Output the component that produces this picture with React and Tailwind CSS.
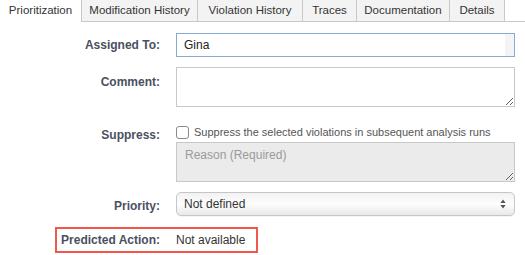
import React from 'react';

const tabs = [
  { label: 'Prioritization', width: 82, active: true },
  { label: 'Modification History', width: 116 },
  { label: 'Violation History', width: 105 },
  { label: 'Traces', width: 54 },
  { label: 'Documentation', width: 93 },
  { label: 'Details', width: 55 }
];

const Label = ({ children, className = '' }) => (
  <div className={`w-[160px] shrink-0 text-right text-[12px] font-bold text-[#4b5060] ${className}`}>
    {children}
  </div>
);

const App = () => {
  return (
    <div
      className="w-[525px] h-[255px] bg-white overflow-hidden text-[#333]"
      style={{ fontFamily: '"Liberation Sans", Arial, sans-serif' }}
    >
      {/* tab strip */}
      <div className="flex h-[22px] border-b border-[#c9c9c9]">
        {tabs.map((tab) => (
          <div
            key={tab.label}
            style={{ width: tab.width }}
            className={`flex items-center justify-center text-[11.5px] text-[#333] border-r border-[#c9c9c9] ${
              tab.active ? 'bg-white h-[22px] -mb-px' : 'bg-[#f3f3f3]'
            }`}
          >
            {tab.label}
          </div>
        ))}
      </div>

      <div className="pt-[11px]">
        {/* assigned to */}
        <div className="flex items-center h-[24px]">
          <Label>Assigned To:</Label>
          <div className="ml-[16px] w-[339px] h-[24px] border border-[#86acd6] flex items-center">
            <span className="pl-[7px] text-[12px] text-[#222] flex-1">Gina</span>
            <div className="w-[9px] h-full bg-[#f4f4f4]"></div>
          </div>
        </div>

        {/* comment */}
        <div className="flex mt-[10px]">
          <Label className="pt-[6px]">Comment:</Label>
          <textarea
            className="ml-[16px] w-[339px] h-[40px] border border-[#c8c8c8] bg-white outline-none"
            defaultValue=""
          />
        </div>

        {/* suppress */}
        <div className="flex mt-[18px]">
          <Label className="pt-[1px]">Suppress:</Label>
          <div className="ml-[16px] w-[339px]">
            <div className="flex items-center h-[15px]">
              <div className="w-[13px] h-[13px] rounded-[3px] border border-[#8a8a8a] bg-white"></div>
              <span className="ml-[5px] text-[11px] text-[#555] whitespace-nowrap">
                Suppress the selected violations in subsequent analysis runs
              </span>
            </div>
            <textarea
              className="mt-[2px] block w-[339px] h-[40px] border border-[#c8c8c8] bg-[#ebebeb] px-[8px] pt-[3px] text-[12px] placeholder:text-[#9a9a9a] outline-none"
              placeholder="Reason (Required)"
              disabled
            />
          </div>
        </div>

        {/* priority */}
        <div className="flex items-center mt-[10px] h-[24px]">
          <Label className="pt-[3px]">Priority:</Label>
          <div className="ml-[16px] w-[339px] h-[24px] rounded-[5px] border border-[#c6c6c6] bg-gradient-to-b from-[#f2f2f2] via-[#fdfdfd] to-[#e9e9e9] flex items-center justify-between px-[7px] shadow-[0_1px_0_rgba(0,0,0,0.04)]">
            <span className="text-[12px] text-[#333]">Not defined</span>
            <svg width="6" height="10" viewBox="0 0 6 10" className="mr-[1px]">
              <path d="M3 0.5 L5.6 4 L0.4 4 Z" fill="#555" />
              <path d="M3 9.5 L5.6 6 L0.4 6 Z" fill="#555" />
            </svg>
          </div>
        </div>

        {/* predicted action */}
        <div className="mt-[11px] ml-[55px] w-[203px] h-[26px] border-2 border-[#f0584e] flex items-center">
          <div className="w-[103px] text-right text-[12px] font-bold text-[#4b5060]">Predicted Action:</div>
          <div className="ml-[16px] text-[12px] text-[#333]">Not available</div>
        </div>
      </div>
    </div>
  );
};

export default App;
